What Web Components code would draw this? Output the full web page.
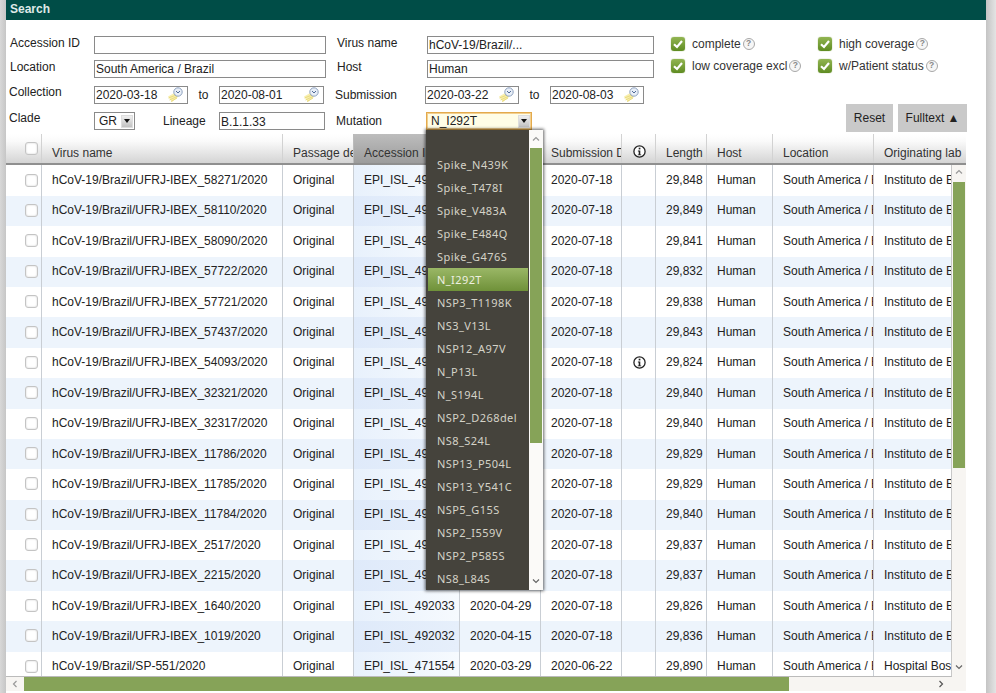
<!DOCTYPE html>
<html lang="en"><head><meta charset="utf-8"><title>Search</title>
<style>
html,body{margin:0;padding:0;background:#fff}
body{width:996px;height:693px;overflow:hidden;font:12px "Liberation Sans",Arial,sans-serif;color:#222}
</style></head><body>
<gs-app></gs-app>
<script>
function def(name,css,html,init){
  customElements.define(name,class extends HTMLElement{
    connectedCallback(){
      if(this.shadowRoot)return;
      const r=this.attachShadow({mode:'open'});
      const h=typeof html==='function'?html(this):html;
      r.innerHTML='<style>'+css+'</style>'+h;
    }
  });
}
const INFO='<svg width="13" height="13" viewBox="0 0 13 13" aria-hidden="true"><circle cx="6.5" cy="6.5" r="5.6" fill="#fff" stroke="#222" stroke-width="1.3"/><rect x="5.7" y="2.7" width="1.7" height="1.7" fill="#222"/><path d="M4.9 5.5H7.3V9.4H8.2V10.3H4.8V9.4H5.7V6.4H4.9Z" fill="#222"/></svg>';

def('gs-check-box',':host{display:block;width:13px;height:13px;box-sizing:border-box;border:1px solid #c4c4c4;border-radius:3px;background:#fff;box-shadow:inset 0 0 2px #ccc}','');

def('gs-date',`:host{display:flex;align-items:center;box-sizing:border-box;height:18px;border:1px solid #8a8a8a;background:#fff;padding-left:1px;font-size:12px;color:#222;position:relative;justify-content:space-between}
svg{margin-right:3px;margin-top:-1px}`,
`<slot></slot><svg width="17" height="16" viewBox="0 0 17 16" aria-hidden="true"><path d="M1 9.5 9 5l2 5-6 5Z" fill="#f8efae"/><path d="M1.5 11 9 8M2.5 13 10 9.5M4 14.5 10 11" stroke="#eadb80" stroke-width="1"/><circle cx="11" cy="5" r="4.2" fill="#e8eef7" stroke="#8fa3c0"/><path d="M9 4l2 2 2-2" fill="none" stroke="#4f6a96" stroke-width="1"/></svg>`);

def('gs-input',`:host{display:block;box-sizing:border-box;height:18px;border:1px solid #8a8a8a;background:#fff;padding:1px 0 0 1px;font-size:12px;line-height:14px;color:#222;white-space:nowrap;overflow:hidden}`,'<slot></slot>');

def('gs-select',`:host{display:flex;align-items:center;justify-content:space-between;box-sizing:border-box;height:18px;border:1px solid #8a8a8a;background:#fff;font-size:12px;color:#222;padding:0 1px 0 4px}
:host([open]){border-color:#e3aa4c;background:#fffde6;box-shadow:inset 0 0 0 1px #f3cf8e}
b{display:flex;align-items:center;justify-content:center;width:12px;height:13px;background:linear-gradient(#f3f3f3,#bdbdbd);box-shadow:inset 0 0 0 1px #ddd}
i{width:0;height:0;border:3px solid transparent;border-top:4px solid #111;border-bottom:0}`,
'<slot></slot><b><i></i></b>');

def('gs-flag',`:host{display:flex;align-items:center;font-size:12px;color:#333;white-space:nowrap}
.b{width:14px;height:14px;border-radius:3px;background:linear-gradient(#92b552,#5f8c22);display:flex;align-items:center;justify-content:center;margin-right:7px;flex:none;box-shadow:0 0 1px #6c8e30}
.q{width:12px;height:12px;margin-left:2px;border:1.5px solid #a8a8a8;border-radius:50%;box-sizing:border-box;font:bold 8.5px/9px "Liberation Sans",sans-serif;color:#888;text-align:center;background:#f6f6f6}`,
`<span class="b"><svg width="12" height="12" viewBox="0 0 12 12" aria-hidden="true"><path d="M2 6.2 5 9l5-6" fill="none" stroke="#fff" stroke-width="2.2"/></svg></span><slot></slot><span class="q">?</span>`);

def('gs-button',`:host{display:flex;align-items:center;justify-content:center;height:28px;background:#c9c9c9;font-size:12px;color:#222;box-sizing:border-box}`,'<slot></slot>');

def('gs-form',`:host{display:grid;grid-template-columns:656px 1fr;height:114px;box-sizing:border-box;padding-top:16px;font-size:12px;color:#222}
.left{display:flex;flex-direction:column}
.row{display:flex;position:relative}
.r1{height:24px}.r2{height:26px}.r3{height:26px}.r4{height:18px}
.lab{white-space:nowrap}
.right{display:flex;flex-direction:column;padding-left:9px;box-sizing:border-box;height:96px}
.checks{display:grid;grid-template-columns:147px 1fr;row-gap:8px;padding-top:1px}
.btns{margin-top:auto;display:flex;gap:5px;justify-content:flex-end;padding-right:19px}
.to{text-align:center}`,
`<div class="left">
 <div class="row r1"><span class="lab" style="width:84px;margin-left:4px">Accession ID</span><gs-input style="width:232px"></gs-input><span class="lab" style="width:90px;margin-left:11px">Virus name</span><gs-input style="width:227px">hCoV-19/Brazil/...</gs-input></div>
 <div class="row r2"><span class="lab" style="width:84px;margin-left:4px">Location</span><gs-input style="width:232px">South America / Brazil</gs-input><span class="lab" style="width:90px;margin-left:11px">Host</span><gs-input style="width:227px">Human</gs-input></div>
 <div class="row r3"><span class="lab" style="width:85px;margin-left:3px;margin-top:-1px">Collection</span><gs-date style="width:94px">2020-03-18</gs-date><span class="lab to" style="width:31px;padding-top:2px">to</span><gs-date style="width:105px">2020-08-01</gs-date><span class="lab" style="width:90px;margin-left:11px;padding-top:2px">Submission</span><gs-date style="width:94px">2020-03-22</gs-date><span class="lab to" style="width:31px;padding-top:2px">to</span><gs-date style="width:94px">2020-08-03</gs-date></div>
 <div class="row r4"><span class="lab" style="width:85px;margin-left:3px;margin-top:-1px">Clade</span><gs-select style="width:41px">GR</gs-select><span class="lab" style="width:84px;padding:2px 0 0 28px;box-sizing:border-box">Lineage</span><gs-input style="width:106px;padding-top:2px">B.1.1.33</gs-input><span class="lab" style="width:101px;padding:2px 0 0 11px;box-sizing:border-box">Mutation</span><gs-select open style="width:106px">N_I292T</gs-select></div>
</div>
<div class="right">
 <div class="checks"><gs-flag>complete</gs-flag><gs-flag>high coverage</gs-flag><gs-flag>low coverage excl</gs-flag><gs-flag>w/Patient status</gs-flag></div>
 <div class="btns"><gs-button style="width:47px">Reset</gs-button><gs-button style="width:69px">Fulltext ▲</gs-button></div>
</div>`);

const COLS=[35,241,71,106,81,81,34,51,66,101,93];
const HEAD=['','Virus name','Passage details/history','Accession ID','Collection date','Submission Date','i','Length','Host','Location','Originating lab'];
const N=['58271','58110','58090','57722','57721','57437','54093','32321','32317','11786','11785','11784','2517','2215','1640','1019'];
const LEN=['29,848','29,849','29,841','29,832','29,838','29,843','29,824','29,840','29,840','29,829','29,829','29,840','29,837','29,837','29,826','29,836','29,890'];
const TPL=COLS.map(w=>w+'px').join(' ');
function row(i){
  const last=i===16, name=last?'hCoV-19/Brazil/SP-551/2020':'hCoV-19/Brazil/UFRJ-IBEX_'+N[i]+'/2020';
  const acc=i===14?'EPI_ISL_492033':i===15?'EPI_ISL_492032':i===16?'EPI_ISL_471554':'EPI_ISL_49';
  const col=i===14?'2020-04-29':i===15?'2020-04-15':i===16?'2020-03-29':'';
  const sub=last?'2020-06-22':'2020-07-18';
  const lab=last?'Hospital Bos':'Instituto de Biofísica';
  const cells=['<gs-check-box></gs-check-box>',name,'Original',acc,col,sub,i===6?INFO:'',LEN[i],'Human','South America / Brazil',lab];
  return '<div class="tr '+(i%2?'alt':'')+'">'+cells.map((c,j)=>'<div class="td c'+j+'">'+c+'</div>').join('')+'</div>';
}
def('gs-table',`:host{display:grid;grid-template-columns:946px 14px;grid-template-rows:31px 512px 14px;width:960px;font-size:12px;color:#222}
.head{grid-column:1/3;display:grid;grid-template-columns:${TPL};height:31px;box-sizing:border-box;border-bottom:2px solid #8f8f8f;background:linear-gradient(#fff 0,#fafafa 25%,#d4d4d4 100%);overflow:hidden}
.th{border-left:1px solid #d2d2d2;padding:12px 0 0 10px;overflow:hidden;white-space:nowrap;color:#333;box-sizing:border-box;height:29px}
.th.c0{border-left:0;padding:8px 0 0 19px}
.th.c3{background:linear-gradient(#bdbdbd,#9c9c9c);border-left-color:#bbb}
.th.c6{padding:11px 0 0 11px}
.body{overflow:hidden;border-right:1px solid #c8c8c8;border-bottom:1px solid #bbb;box-sizing:border-box;padding-top:.4px}
.tr{display:grid;grid-template-columns:${TPL};height:30.4px}
.tr.alt{background:#edf4fc}
.td{border-left:1px solid #c9ced4;padding-left:10px;overflow:hidden;white-space:nowrap;display:flex;align-items:center;box-sizing:border-box;padding-bottom:1px}
.td.c0{border-left:0;padding-left:19px}
.td.c3{background:linear-gradient(90deg,#e8f1fc,#f6fafe)}
.alt .td.c3{background:linear-gradient(90deg,#dfeafa,#e6effb)}
.td.c6{padding-left:11px}
.vs{background:#f7f5f2;display:flex;flex-direction:column;align-items:center;position:relative}
.thumb{background:#86a358;width:12px;height:286px;margin-top:20px}
.hs{grid-column:1/3;background:#f7f5f2;display:flex;align-items:center}
.hthumb{width:765px;height:14px;background:#86a358;margin-left:0}
.arr{display:block;flex:none}`,
`<div class="head">${HEAD.map((h,j)=>'<div class="th c'+j+'">'+(j===0?'<gs-check-box></gs-check-box>':j===6?INFO:h)+'</div>').join('')}</div>
<div class="body">${Array.from({length:17},(_,i)=>row(i)).join('')}</div>
<div class="vs"><svg class="arr" style="margin-top:3px;margin-bottom:-14px" width="10" height="8" viewBox="0 0 10 8"><path d="M2 5.5 5 2.5 8 5.5" fill="none" stroke="#999" stroke-width="1.2"/></svg><div class="thumb"></div><svg class="arr" style="margin-top:auto;margin-bottom:6px" width="10" height="8" viewBox="0 0 10 8"><path d="M2 2.5 5 5.5 8 2.5" fill="none" stroke="#666" stroke-width="1.2"/></svg></div>
<div class="hs"><svg class="arr" style="margin-left:5px;margin-right:5px" width="8" height="10" viewBox="0 0 8 10"><path d="M5.5 2 2.5 5 5.5 8" fill="none" stroke="#999" stroke-width="1.2"/></svg><div class="hthumb"></div><svg class="arr" style="margin-left:148px" width="8" height="10" viewBox="0 0 8 10"><path d="M2.5 2 5.5 5 2.5 8" fill="none" stroke="#555" stroke-width="1.2"/></svg></div>`);

const ITEMS=['Spike_N439K','Spike_T478I','Spike_V483A','Spike_E484Q','Spike_G476S','N_I292T','NSP3_T1198K','NS3_V13L','NSP12_A97V','N_P13L','N_S194L','NSP2_D268del','NS8_S24L','NSP13_P504L','NSP13_Y541C','NSP5_G15S','NSP2_I559V','NSP2_P585S','NS8_L84S'];
def('gs-dropdown',`:host{position:absolute;left:426px;top:130px;width:117px;height:460px;display:flex;background:#45433c;box-shadow:0 0 3px 1px rgba(0,0,0,.6);font:11px "Noto Sans",sans-serif;letter-spacing:.42px;color:#d5d3c8;z-index:5}
.list{width:103px;flex:none;padding-top:23px;box-sizing:border-box}
.it{height:23px;line-height:24px;padding-left:11px;white-space:nowrap}
.it.on{background:linear-gradient(#9ab766,#6f9139);margin:0 1px 0 2px;padding-left:9px;color:#eef0e0}
.sb{flex:1;background:#fbfaf8;display:flex;flex-direction:column;align-items:center;position:relative}
.th{width:12px;height:295px;background:#86a358;margin-top:18px}
svg{display:block}`,
`<div class="list">${ITEMS.map(t=>'<div class="it'+(t==='N_I292T'?' on':'')+'">'+t+'</div>').join('')}</div>
<div class="sb"><svg style="margin-top:5px;margin-bottom:-13px" width="10" height="8" viewBox="0 0 10 8"><path d="M2 5.5 5 2.5 8 5.5" fill="none" stroke="#999" stroke-width="1.2"/></svg><div class="th"></div><svg style="margin-top:auto;margin-bottom:5px" width="10" height="8" viewBox="0 0 10 8"><path d="M2 2.5 5 5.5 8 2.5" fill="none" stroke="#666" stroke-width="1.2"/></svg></div>`);

def('gs-app',`:host{display:flex;width:996px;height:693px;position:relative;overflow:hidden}
.gl{width:6px;flex:none;background:linear-gradient(90deg,#d8d8d8,#c6c6c6)}
.gr{width:10px;flex:none;background:linear-gradient(90deg,#c4c4c4,#e4e4e4)}
.main{width:980px;flex:none;background:#fff}
.title{height:20px;background:#004d47;color:#dfe9e7;font:bold 12px/18px "Liberation Sans",sans-serif;padding-left:4px}`,
`<div class="gl"></div><div class="main"><div class="title">Search</div><gs-form></gs-form><gs-table></gs-table></div><div class="gr"></div><gs-dropdown></gs-dropdown>`);
</script>
</body></html>
